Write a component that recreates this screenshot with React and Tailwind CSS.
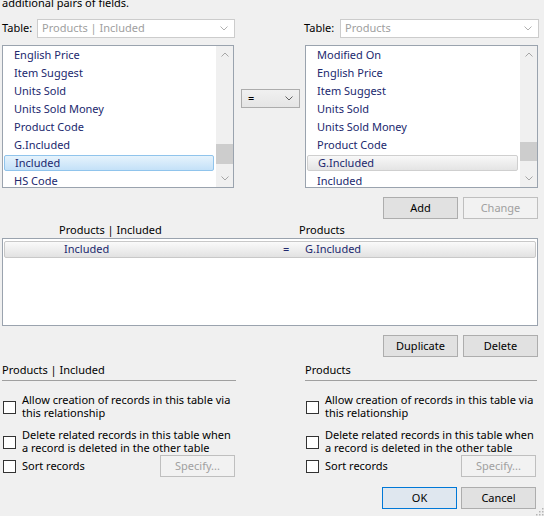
import React from "react";

function Chev({ up, color = "#a6a6a6" }) {
  return (
    <svg width="8" height="5" viewBox="0 0 8 5">
      <polyline
        points={up ? "0.5,4.5 4,1 7.5,4.5" : "0.5,0.5 4,4 7.5,0.5"}
        fill="none"
        stroke={color}
        strokeWidth="1"
      />
    </svg>
  );
}

function Combo({ text, w }) {
  return (
    <div className={`h-[19px] ${w} border border-[#cccccc] bg-white flex items-center pl-[4px] pr-[6px] text-[#a0a0a0]`}>
      <span className="flex-1 whitespace-nowrap">{text}</span>
      <Chev color="#b0b0b0" />
    </div>
  );
}

function ListBox({ items, sel, active, w, thumbTop, thumbH }) {
  return (
    <div className={`${w} h-[143px] border border-[#9aa3ae] bg-white flex overflow-hidden`}>
      <div className="flex-1 flex flex-col overflow-hidden">
        {items.map((it, i) => (
          <div key={i} className="h-[18px] shrink-0 py-[1px] pl-[1px] pr-[2px]">
            <div
              className={
                "h-[16px] flex items-center pl-[10px] text-[#21286e] whitespace-nowrap " +
                (i === sel
                  ? active
                    ? "border border-[#90c4ec] rounded-[2px] bg-gradient-to-b from-[#e6f3fc] to-[#c4e1f8] pl-[9px]"
                    : "border border-[#cfcfcf] rounded-[2px] bg-gradient-to-b from-[#f8f8f8] to-[#e4e4e4] pl-[9px]"
                  : "")
              }
            >
              {it}
            </div>
          </div>
        ))}
      </div>
      <div className="w-[17px] shrink-0 bg-[#f0f0f0] flex flex-col">
        <div className="h-[17px] flex items-center justify-center">
          <Chev up />
        </div>
        <div className={`${thumbTop} ${thumbH} bg-[#cdcdcd]`} />
        <div className="flex-1" />
        <div className="h-[17px] flex items-center justify-center">
          <Chev />
        </div>
      </div>
    </div>
  );
}

function Btn({ children, disabled, def, w = "w-[75px]" }) {
  let cls = "h-[22px] flex items-center justify-center border ";
  if (def) cls += "border-[#0078d7] bg-[#dfe7ef] text-black";
  else if (disabled) cls += "border-[#bfbfbf] bg-[#f2f2f2] text-[#a0a0a0]";
  else cls += "border-[#adadad] bg-[#e1e1e1] text-black";
  return <div className={`${cls} ${w}`}>{children}</div>;
}

function Check() {
  return <div className="w-[13px] h-[13px] border border-[#333333] bg-white shrink-0" />;
}

function Panel({ title, w, cbMl }) {
  return (
    <div className={`${w} flex flex-col`}>
      <div className="h-[16px] leading-[16px] whitespace-nowrap">{title}</div>
      <div className="h-px bg-[#a0a0a0] mt-[2px]" />
      <div className="mt-[12px] flex items-start">
        <div className={`${cbMl} mt-[8px]`}>
          <Check />
        </div>
        <div className="ml-[6px] leading-[13px] whitespace-nowrap">
          <div>Allow creation of records in this table via</div>
          <div>this relationship</div>
        </div>
      </div>
      <div className="mt-[9px] flex items-start">
        <div className={`${cbMl} mt-[8px]`}>
          <Check />
        </div>
        <div className="ml-[6px] leading-[13px] whitespace-nowrap">
          <div>Delete related records in this table when</div>
          <div>a record is deleted in the other table</div>
        </div>
      </div>
      <div className="mt-[1px] h-[22px] flex items-center">
        <div className={`${cbMl}`}>
          <Check />
        </div>
        <div className="ml-[6px] whitespace-nowrap">Sort records</div>
        <div className="flex-1" />
        <div className="mr-[1px]">
          <Btn disabled>Specify...</Btn>
        </div>
      </div>
    </div>
  );
}

export default function App() {
  const left = ["English Price", "Item Suggest", "Units Sold", "Units Sold Money", "Product Code", "G.Included", "Included", "HS Code"];
  const right = ["Modified On", "English Price", "Item Suggest", "Units Sold", "Units Sold Money", "Product Code", "G.Included", "Included"];
  return (
    <div className="w-[544px] h-[516px] bg-[#f0f0f0] overflow-hidden relative flex flex-col text-[11px] text-black font-['Noto_Sans',sans-serif]">
      <div className="h-[16px] leading-[16px] -mt-[5px] pl-[2px] whitespace-nowrap">additional pairs of fields.</div>

      <div className="mt-[8px] flex">
        <div className="ml-[2px] w-[234px] flex flex-col">
          <div className="flex items-center h-[19px]">
            <div className="w-[35px]">Table:</div>
            <Combo text="Products | Included" w="w-[198px]" />
          </div>
          <div className="mt-[7px]">
            <ListBox items={left} sel={6} active w="w-[232px]" thumbTop="mt-[81px]" thumbH="h-[20px]" />
          </div>
        </div>
        <div className="ml-[5px] mt-[70px]">
          <div className="w-[59px] h-[19px] border border-[#acacac] bg-gradient-to-b from-[#f0f0f0] to-[#e5e5e5] flex items-center pl-[6px] pr-[6px]">
            <span className="flex-1">=</span>
            <Chev color="#606060" />
          </div>
        </div>
        <div className="ml-[4px] w-[235px] flex flex-col">
          <div className="flex items-center h-[19px]">
            <div className="w-[36px]">Table:</div>
            <Combo text="Products" w="w-[199px]" />
          </div>
          <div className="mt-[7px] ml-[1px]">
            <ListBox items={right} sel={6} active={false} w="w-[233px]" thumbTop="mt-[79px]" thumbH="h-[19px]" />
          </div>
        </div>
      </div>

      <div className="mt-[9px] flex justify-end pr-[6px] gap-[5px]">
        <Btn>Add</Btn>
        <Btn disabled>Change</Btn>
      </div>

      <div className="mt-[3px] h-[16px] leading-[16px] flex whitespace-nowrap">
        <div className="ml-[59px] w-[240px]">Products | Included</div>
        <div>Products</div>
      </div>

      <div className="ml-[2px] w-[536px] h-[88px] border border-[#9aa3ae] bg-white pt-[2px] px-[1px]">
        <div className="h-[17px] border border-[#c8c8c8] rounded-[2px] bg-gradient-to-b from-[#fafafa] to-[#e2e2e2] flex items-center text-[#21286e] whitespace-nowrap">
          <div className="ml-[59px] w-[219px]">Included</div>
          <div className="w-[22px]">=</div>
          <div>G.Included</div>
        </div>
      </div>

      <div className="mt-[9px] flex justify-end pr-[6px] gap-[5px]">
        <Btn>Duplicate</Btn>
        <Btn>Delete</Btn>
      </div>

      <div className="mt-[5px] flex">
        <div className="ml-[2px]">
          <Panel title="Products | Included" w="w-[234px]" cbMl="ml-[1px]" />
        </div>
        <div className="ml-[69px]">
          <Panel title="Products" w="w-[232px]" cbMl="ml-[1px]" />
        </div>
      </div>

      <div className="mt-[10px] flex justify-end pr-[8px] gap-[4px]">
        <Btn def>OK</Btn>
        <Btn>Cancel</Btn>
      </div>

      <svg className="absolute right-0 bottom-0" width="9" height="9" viewBox="0 0 9 9">
        {[[7, 1], [7, 4], [4, 4], [7, 7], [4, 7], [1, 7]].map(([x, y], i) => (
          <rect key={i} x={x} y={y} width="1.5" height="1.5" fill="#b5b5b5" />
        ))}
      </svg>
    </div>
  );
}
